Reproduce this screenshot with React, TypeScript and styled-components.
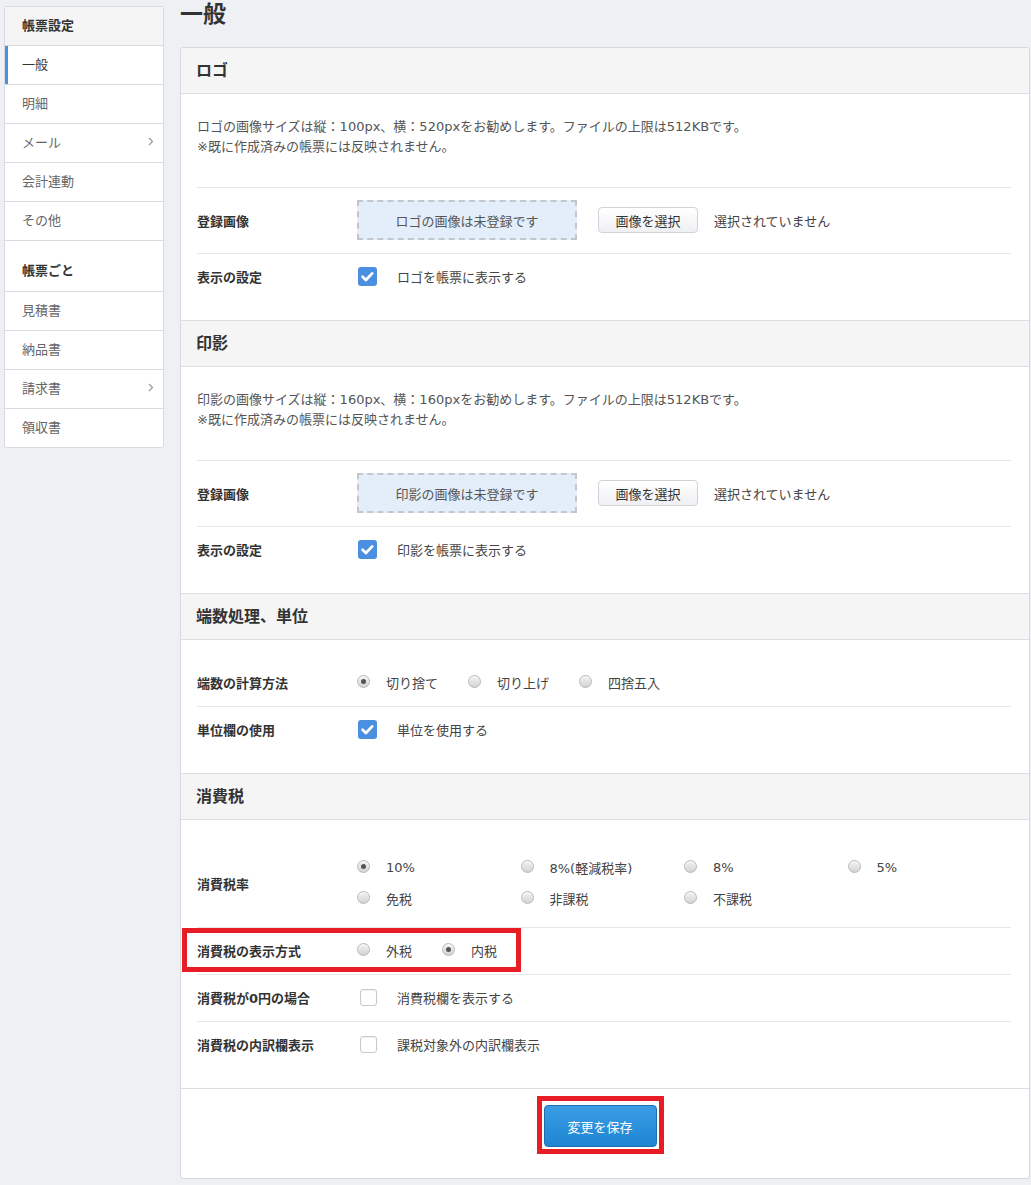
import styled, { createGlobalStyle } from 'styled-components';

const GlobalStyle = createGlobalStyle`
  * { box-sizing: border-box; }
  body {
    margin: 0;
    background: #eef0f4;
    font-family: "DejaVu Sans", "Noto Sans CJK JP", sans-serif;
    font-size: 13px;
    color: #333;
  }
`;

const Page = styled.div`
    display: flex;
    align-items: flex-start;
    gap: 16px;
    padding: 0 1px 5px 4px;
`;

const Sidebar = styled.nav`
    width: 160px;
    flex-shrink: 0;
    margin-top: 6px;
    background: #fff;
    border: 1px solid #d8dbe0;
    border-radius: 2px;
`;

const SideGroup = styled.div<{ $spaced?: boolean }>`
    display: flex;
    align-items: ${(p) => (p.$spaced ? 'flex-end' : 'center')};
    height: ${(p) => (p.$spaced ? '51px' : '39px')};
    padding: ${(p) => (p.$spaced ? '0 0 12px 17px' : '0 0 4px 17px')};
    background: ${(p) => (p.$spaced ? '#fff' : '#f5f5f5')};
    border-bottom: 1px solid #d8dbe0;
    font-weight: bold;
    color: #333;
`;

const SideItem = styled.div<{ $active?: boolean }>`
    display: flex;
    align-items: center;
    height: 39px;
    padding: 0 9px 4px 17px;
    border-bottom: 1px solid #d8dbe0;
    color: ${(p) => (p.$active ? '#333' : '#666')};
    box-shadow: ${(p) => (p.$active ? 'inset 3px 0 0 #4a90e2' : 'none')};
    &:last-child { border-bottom: none; height: 38px; }
`;

const Chevron = styled.svg`
    margin-left: auto;
`;

const Main = styled.main`
    flex: 1;
    min-width: 0;
`;

const Title = styled.h1`
    margin: 0;
    padding-bottom: 19px;
    font-size: 23px;
    line-height: 28px;
    font-weight: bold;
    color: #333;
`;

const Panel = styled.section`
    background: #fff;
    border: 1px solid #d6d9dd;
    border-radius: 3px;
`;

const SectionHeader = styled.h2`
    margin: 0;
    height: 46px;
    display: flex;
    align-items: center;
    padding: 0 15px 4px;
    background: #f5f5f5;
    border-bottom: 1px solid #dcdee2;
    font-size: 16px;
    font-weight: bold;
    color: #333;
    &:first-child { border-radius: 3px 3px 0 0; }
`;

const SectionBody = styled.div`
    padding: 20px 18px 20px 16px;
    border-bottom: 1px solid #dcdee2;
`;

const Description = styled.p`
    margin: 0;
    padding: 3px 0 30px;
    line-height: 20px;
    color: #555;
    border-bottom: 1px solid #e6e6e6;
`;

const Row = styled.div<{ $highlight?: boolean }>`
    position: relative;
    display: flex;
    align-items: center;
    min-height: 46px;
    padding: 12px 0 13px;
    & + & { border-top: 1px solid #e6e6e6; min-height: 47px; }
    ${(p) =>
        p.$highlight &&
        `
    &::after {
      content: '';
      box-sizing: border-box;
      position: absolute;
      left: -15px;
      top: 0;
      width: 339px;
      height: 44px;
      border: 5px solid #e81c24;
      pointer-events: none;
    }
  `}
`;

const Label = styled.div`
    width: 160px;
    flex-shrink: 0;
    font-weight: bold;
    color: #333;
`;

const Dropzone = styled.div`
    width: 220px;
    height: 40px;
    display: flex;
    align-items: center;
    justify-content: center;
    background: #e3eefa;
    border: 2px dashed #c3c7cc;
    color: #555;
`;

const SelectButton = styled.button`
    margin-left: 21px;
    width: 100px;
    height: 26px;
    border: 1px solid #cfd3d8;
    border-radius: 4px;
    background: linear-gradient(#ffffff, #eef0f3);
    font-family: inherit;
    font-size: 13px;
    color: #333;
`;

const FileName = styled.span`
    margin-left: 16px;
    color: #444;
`;

const CheckLine = styled.label`
    display: flex;
    align-items: center;
    color: #444;
`;

const CheckBox = styled.span<{ $checked?: boolean }>`
    display: flex;
    align-items: center;
    justify-content: center;
    width: ${(p) => (p.$checked ? '19px' : '17px')};
    height: ${(p) => (p.$checked ? '19px' : '17px')};
    margin: ${(p) => (p.$checked ? '0 20px 0 1px' : '0 20px 0 3px')};
    border-radius: 3px;
    background: ${(p) => (p.$checked ? '#4a8fe0' : '#fff')};
    border: ${(p) => (p.$checked ? 'none' : '1px solid #c8c8c8')};
    box-shadow: ${(p) => (p.$checked ? 'none' : 'inset 0 1px 1px rgba(0,0,0,0.06)')};
`;

const Options = styled.div`
    display: flex;
    align-items: center;
`;

const TaxGrid = styled.div`
    display: grid;
    grid-template-columns: repeat(4, 163.5px);
    grid-auto-rows: 31px;
    align-items: center;
`;

const Option = styled.label`
    display: inline-flex;
    align-items: center;
    margin-right: 30px;
    color: #444;
`;

const Radio = styled.span<{ $checked?: boolean }>`
    position: relative;
    width: 13px;
    height: 13px;
    margin: -3px 16px 0 0;
    border-radius: 50%;
    border: 1px solid #b8b8b8;
    background: linear-gradient(#f3f3f3, #d3d3d3);
    box-shadow: inset 0 1px 1px rgba(255, 255, 255, 0.7);
    &::after {
        content: '';
        display: ${(p) => (p.$checked ? 'block' : 'none')};
        position: absolute;
        left: 3px;
        top: 3px;
        width: 5px;
        height: 5px;
        border-radius: 50%;
        background: #555;
    }
`;

const Footer = styled.div`
    display: flex;
    justify-content: center;
    padding: 7px 10px 24px 0;
`;

const HighlightBox = styled.div`
    padding: 4px 2px 2px 2px;
    border: 5px solid #e81c24;
`;

const SaveButton = styled.button`
    width: 113px;
    height: 42px;
    border: 1px solid #1b6fae;
    border-radius: 4px;
    background: linear-gradient(#3a9de5, #1f85d3);
    color: #fff;
    font-family: inherit;
    font-size: 13px;
`;

function ChevronIcon() {
    return (
        <Chevron width="6" height="9" viewBox="0 0 6 9">
            <path d="M1 1l3.5 3.5L1 8" fill="none" stroke="#999" strokeWidth="1.2" />
        </Chevron>
    );
}

function Check({ checked, children }: { checked?: boolean; children: React.ReactNode }) {
    return (
        <CheckLine>
            <CheckBox $checked={checked}>
                {checked && (
                    <svg width="19" height="19" viewBox="0 0 19 19">
                        <path d="M4.6 9.8l3.3 3.2 6.3-6.6" fill="none" stroke="#fff" strokeWidth="2.8" strokeLinecap="round" strokeLinejoin="round" />
                    </svg>
                )}
            </CheckBox>
            {children}
        </CheckLine>
    );
}

function RadioOption({ checked, children }: { checked?: boolean; children: React.ReactNode }) {
    return (
        <Option>
            <Radio $checked={checked} />
            {children}
        </Option>
    );
}

const sideTop = ['一般', '明細', 'メール', '会計連動', 'その他'];
const sideBottom = ['見積書', '納品書', '請求書', '領収書'];
const withChevron = ['メール', '請求書'];

function ImageSection({ title, desc, empty, show }: { title: string; desc: string; empty: string; show: string }) {
    return (
        <>
            <SectionHeader>{title}</SectionHeader>
            <SectionBody>
                <Description>
                    {desc}
                    <br />
                    ※既に作成済みの帳票には反映されません。
                </Description>
                <Row>
                    <Label>登録画像</Label>
                    <Dropzone>{empty}</Dropzone>
                    <SelectButton>画像を選択</SelectButton>
                    <FileName>選択されていません</FileName>
                </Row>
                <Row>
                    <Label>表示の設定</Label>
                    <Check checked>{show}</Check>
                </Row>
            </SectionBody>
        </>
    );
}

export default function App() {
    return (
        <Page>
            <GlobalStyle />
            <Sidebar>
                <SideGroup>帳票設定</SideGroup>
                {sideTop.map((t) => (
                    <SideItem key={t} $active={t === '一般'}>
                        {t}
                        {withChevron.includes(t) && <ChevronIcon />}
                    </SideItem>
                ))}
                <SideGroup $spaced>帳票ごと</SideGroup>
                {sideBottom.map((t) => (
                    <SideItem key={t}>
                        {t}
                        {withChevron.includes(t) && <ChevronIcon />}
                    </SideItem>
                ))}
            </Sidebar>
            <Main>
                <Title>一般</Title>
                <Panel>
                    <ImageSection
                        title="ロゴ"
                        desc="ロゴの画像サイズは縦：100px、横：520pxをお勧めします。ファイルの上限は512KBです。"
                        empty="ロゴの画像は未登録です"
                        show="ロゴを帳票に表示する"
                    />
                    <ImageSection
                        title="印影"
                        desc="印影の画像サイズは縦：160px、横：160pxをお勧めします。ファイルの上限は512KBです。"
                        empty="印影の画像は未登録です"
                        show="印影を帳票に表示する"
                    />

                    <SectionHeader>端数処理、単位</SectionHeader>
                    <SectionBody>
                        <Row>
                            <Label>端数の計算方法</Label>
                            <Options>
                                <RadioOption checked>切り捨て</RadioOption>
                                <RadioOption>切り上げ</RadioOption>
                                <RadioOption>四捨五入</RadioOption>
                            </Options>
                        </Row>
                        <Row>
                            <Label>単位欄の使用</Label>
                            <Check checked>単位を使用する</Check>
                        </Row>
                    </SectionBody>

                    <SectionHeader>消費税</SectionHeader>
                    <SectionBody>
                        <Row>
                            <Label>消費税率</Label>
                            <TaxGrid>
                                <RadioOption checked>10%</RadioOption>
                                <RadioOption>8%(軽減税率)</RadioOption>
                                <RadioOption>8%</RadioOption>
                                <RadioOption>5%</RadioOption>
                                <RadioOption>免税</RadioOption>
                                <RadioOption>非課税</RadioOption>
                                <RadioOption>不課税</RadioOption>
                            </TaxGrid>
                        </Row>
                        <Row $highlight>
                            <Label>消費税の表示方式</Label>
                            <Options>
                                <RadioOption>外税</RadioOption>
                                <RadioOption checked>内税</RadioOption>
                            </Options>
                        </Row>
                        <Row>
                            <Label>消費税が0円の場合</Label>
                            <Check>消費税欄を表示する</Check>
                        </Row>
                        <Row>
                            <Label>消費税の内訳欄表示</Label>
                            <Check>課税対象外の内訳欄表示</Check>
                        </Row>
                    </SectionBody>

                    <Footer>
                        <HighlightBox>
                            <SaveButton>変更を保存</SaveButton>
                        </HighlightBox>
                    </Footer>
                </Panel>
            </Main>
        </Page>
    );
}
